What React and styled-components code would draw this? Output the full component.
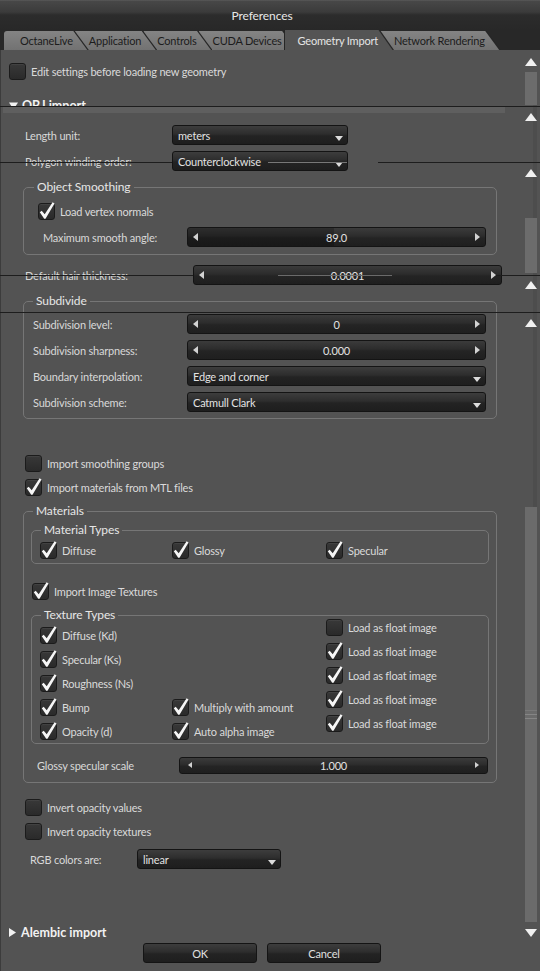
import styled, { createGlobalStyle } from 'styled-components';

const GlobalStyle = createGlobalStyle`
  html, body {
    margin: 0;
    padding: 0;
    background: #535353;
  }
  body {
    font-family: Lato, 'Liberation Sans', sans-serif;
    font-size: 11px;
    letter-spacing: -0.2px;
    color: #dadada;
  }
  * { box-sizing: border-box; }
`;

const Window = styled.div`
  position: relative;
  width: 540px;
  height: 971px;
  overflow: hidden;
  display: flex;
  flex-direction: column;
  background: #535353;
  box-shadow: inset 1px 0 0 #3c3c3c;
`;

const TitleBar = styled.div`
  height: 30px;
  flex-shrink: 0;
  display: flex;
  align-items: center;
  justify-content: center;
  padding-right: 16px;
  font-size: 12px;
  letter-spacing: -0.1px;
  color: #e8e8e8;
  background: linear-gradient(#5a5a5a 0, #474747 5%, #3b3b3b 40%, #2c2c2c 50%, #282828 100%);
`;

const TabBar = styled.div`
  height: 20px;
  flex-shrink: 0;
  display: flex;
  align-items: flex-end;
  padding-left: 4px;
  background: #282828;
`;

const Tab = styled.div`
  position: relative;
  height: ${p => (p.$active ? 20 : 19)}px;
  margin-left: ${p => (p.$first ? 0 : -14)}px;
  padding: 0 16px 0 ${p => (p.$first ? 16 : 14)}px;
  display: flex;
  align-items: center;
  white-space: nowrap;
  z-index: ${p => (p.$active ? 20 : 10 - p.$index)};
  color: ${p => (p.$active ? '#e4e4e4' : '#1c1c1c')};
  background: #262626;
  border-top-left-radius: ${p => (p.$first ? 3 : 0)}px;
  clip-path: polygon(0 0, calc(100% - 14px) 0, 100% 100%, 0 100%);

  &::before {
    content: '';
    position: absolute;
    top: 0;
    bottom: 0;
    right: 0;
    left: ${p => (p.$active ? 1 : 0)}px;
    z-index: -1;
    border-top-left-radius: ${p => (p.$first ? 3 : 0)}px;
    background: ${p => (p.$active ? '#545454' : 'linear-gradient(#848484, #727272)')};
    clip-path: polygon(0 0, calc(100% - 15.5px) 0, calc(100% - 1.5px) 100%, 0 100%);
  }
`;

const Body = styled.div`
  display: flex;
  height: 892px;
  flex-shrink: 0;
`;

const Content = styled.div`
  width: 522px;
  display: flex;
  flex-direction: column;
`;

const Row = styled.div`
  display: flex;
  align-items: center;
  flex-shrink: 0;
  height: ${p => p.$h || 24}px;
  margin-top: ${p => p.$mt || 0}px;
  padding-left: ${p => p.$indent || 0}px;
`;

const Section = styled.div`
  display: flex;
  align-items: center;
  gap: 4px;
  flex-shrink: 0;
  height: ${p => p.$h}px;
  margin-top: ${p => (p.$auto ? 'auto' : `${p.$mt || 0}px`)};
  padding-left: ${p => p.$indent}px;
  font-size: 12.5px;
  letter-spacing: 0;
  font-weight: 700;
  color: #f2f2f2;
`;

const Label = styled.span`
  width: ${p => p.$w}px;
  flex-shrink: 0;
  white-space: nowrap;
  color: #d8d8d8;
`;

const CheckItem = styled.label`
  display: flex;
  align-items: center;
  height: 24px;
  white-space: nowrap;
`;

const Box = styled.span`
  position: relative;
  width: 17px;
  height: 17px;
  flex-shrink: 0;
  border: 1px solid #1b1b1b;
  border-radius: 3px;
  background: linear-gradient(#383838, #2a2a2a);
  box-shadow: inset 0 1px 0 rgba(255, 255, 255, 0.05);
`;

const Tick = styled.svg`
  position: absolute;
  left: -1px;
  top: -1px;
  width: 17px;
  height: 17px;
  overflow: visible;
`;

const CheckText = styled.span`
  margin-left: 5px;
  color: #dadada;
`;

const Select = styled.div`
  position: relative;
  width: ${p => p.$w}px;
  height: 20px;
  flex-shrink: 0;
  padding-left: 5px;
  display: flex;
  align-items: center;
  color: #e2e2e2;
  border: 1px solid #141414;
  border-radius: 3px;
  background: linear-gradient(#3d3d3d 0, #2d2d2d 45%, #232323 55%, #1e1e1e 100%);

  &::after {
    content: '';
    position: absolute;
    right: 4px;
    bottom: 3px;
    border-left: 4px solid transparent;
    border-right: 4px solid transparent;
    border-top: 5px solid #dcdcdc;
  }
`;

const Slider = styled.div`
  position: relative;
  width: ${p => p.$w}px;
  height: ${p => p.$h || 20}px;
  flex-shrink: 0;
  display: flex;
  align-items: center;
  justify-content: center;
  overflow: hidden;
  color: #e2e2e2;
  border: 1px solid #141414;
  border-radius: 3px;
  background: linear-gradient(#3b3b3b 0, #2c2c2c 45%, #242424 55%, #1f1f1f 100%);
`;

const SliderFill = styled.div`
  position: absolute;
  left: 0;
  top: 0;
  bottom: 0;
  background: rgba(0, 0, 0, 0.22);
`;

const SliderValue = styled.span`
  position: relative;
`;

const Arrow = styled.span`
  position: absolute;
  top: 50%;
  transform: translateY(-50%);
  border-top: ${p => (p.$small ? 3 : 4.5)}px solid transparent;
  border-bottom: ${p => (p.$small ? 3 : 4.5)}px solid transparent;
  ${p =>
    p.$dir === 'left'
      ? `left: ${p.$small ? 8 : 5}px; border-right: ${p.$small ? 4 : 5}px solid #d2d2d2;`
      : `right: ${p.$small ? 8 : 5}px; border-left: ${p.$small ? 4 : 5}px solid #d2d2d2;`}
`;

const Group = styled.fieldset`
  margin: ${p => p.$mt || 0}px 0 0 ${p => p.$ml}px;
  width: ${p => p.$w}px;
  min-width: 0;
  flex-shrink: 0;
  padding: ${p => p.$pt || 0}px 0 ${p => p.$pb || 0}px 0;
  border: 1px solid #767676;
  border-radius: 5px;
  display: flex;
  flex-direction: column;
`;

const Legend = styled.legend`
  margin-left: ${p => p.$ml || 9}px;
  padding: 0 3px;
  font-size: 12px;
  letter-spacing: -0.1px;
  line-height: 16px;
  color: #e6e6e6;
`;

const TypeGrid = styled.div`
  display: grid;
  grid-template-columns: 132px 154px 1fr;
  align-items: start;
  padding-left: 8px;
`;

const Column = styled.div`
  display: flex;
  flex-direction: column;
  margin-top: ${p => p.$mt || 0}px;
`;

const ScrollBar = styled.div`
  width: 18px;
  display: flex;
  flex-direction: column;
  align-items: center;
  padding: 8px 0 5px;
`;

const UpArrow = styled.div`
  border-left: 6px solid transparent;
  border-right: 6px solid transparent;
  border-bottom: 8px solid #f0f0f0;
`;

const DownArrow = styled.div`
  margin-top: 7px;
  border-left: 6px solid transparent;
  border-right: 6px solid transparent;
  border-top: 8px solid #f0f0f0;
`;

const Track = styled.div`
  flex: 1;
  width: 12px;
  margin-top: 6px;
  display: flex;
  flex-direction: column;
  background: linear-gradient(to right, transparent 8px, #4d4d4d 8px);
`;

const Handle = styled.div`
  position: relative;
  margin-top: auto;
  height: 415px;
  background: #6b6b6b;

  &::after {
    content: '';
    position: absolute;
    left: 0;
    right: 0;
    top: 50%;
    height: 9px;
    transform: translateY(-50%);
    background: repeating-linear-gradient(#858585 0 1px, transparent 1px 4px);
  }
`;

const Footer = styled.div`
  display: flex;
  gap: 10px;
  padding: 1px 0 0 143px;
  flex-shrink: 0;
`;

const Button = styled.button`
  width: 114px;
  height: 20px;
  padding: 0;
  font-family: inherit;
  font-size: 11px;
  letter-spacing: -0.2px;
  color: #e0e0e0;
  border: 1px solid #141414;
  border-radius: 3px;
  background: linear-gradient(#3d3d3d 0, #2d2d2d 45%, #232323 55%, #1e1e1e 100%);
`;

const Overlay = styled.div`
  position: absolute;
  inset: 0;
  pointer-events: none;
  z-index: 50;
`;

const GhostLine = styled.div`
  position: absolute;
  top: ${p => p.$y}px;
  left: ${p => p.$x}px;
  width: ${p => p.$w}px;
  height: ${p => p.$h || 1}px;
  background: ${p => p.$c || '#1d1d1d'};
`;

const GhostArrow = styled.div`
  position: absolute;
  top: ${p => p.$y}px;
  left: 525px;
  border-left: 6px solid transparent;
  border-right: 6px solid transparent;
  border-bottom: 8px solid #f0f0f0;
`;

const Caret = ({ open }) => (
  <svg width="9" height="9" viewBox="0 0 9 9">
    {open ? <path d="M0 1.5 H9 L4.5 8.5 Z" fill="#f2f2f2" /> : <path d="M1 0 L8 4.5 L1 9 Z" fill="#f2f2f2" />}
  </svg>
);

const Check = ({ checked, children }) => (
  <CheckItem>
    <Box>
      {checked && (
        <Tick viewBox="0 0 17 17">
          <path d="M1.8 9.3 L3.7 7.7 L6.7 11.3 L14.6 -0.7 L16.5 0.5 L7.5 15.8 L6.2 15.8 Z" fill="#f6f6f6" />
        </Tick>
      )}
    </Box>
    {children && <CheckText>{children}</CheckText>}
  </CheckItem>
);

const Spin = ({ w, h, value, fill, small }) => (
  <Slider $w={w} $h={h}>
    {fill ? <SliderFill style={{ width: `${fill * 100}%` }} /> : null}
    <Arrow $dir="left" $small={small} />
    <SliderValue>{value}</SliderValue>
    <Arrow $dir="right" $small={small} />
  </Slider>
);

const tabs = ['OctaneLive', 'Application', 'Controls', 'CUDA Devices', 'Geometry Import', 'Network Rendering'];

const App = () => {
  return (
    <Window>
      <GlobalStyle />
      <TitleBar>Preferences</TitleBar>
      <TabBar>
        {tabs.map((t, i) => (
          <Tab key={t} $index={i} $first={i === 0} $active={t === 'Geometry Import'}>
            {t}
          </Tab>
        ))}
      </TabBar>

      <Body>
        <Content>
          <Row $mt={9} $indent={9}>
            <Check>Edit settings before loading new geometry</Check>
          </Row>

          <Section $h={24} $mt={10} $indent={9}>
            <Caret open />
            OBJ import
          </Section>

          <Row $h={26} $mt={5} $indent={25}>
            <Label $w={147}>Length unit:</Label>
            <Select $w={176}>meters</Select>
          </Row>
          <Row $h={26} $indent={25}>
            <Label $w={147}>Polygon winding order:</Label>
            <Select $w={176}>Counterclockwise</Select>
          </Row>

          <Group $mt={5} $ml={23} $w={474} $pt={3} $pb={4}>
            <Legend $ml={10}>Object Smoothing</Legend>
            <Row $h={26} $indent={14}>
              <Check checked>Load vertex normals</Check>
            </Row>
            <Row $h={26} $indent={19}>
              <Label $w={144}>Maximum smooth angle:</Label>
              <Spin w={299} value="89.0" fill={0.49} />
            </Row>
          </Group>

          <Row $h={26} $mt={7} $indent={25}>
            <Label $w={168}>Default hair thickness:</Label>
            <Spin w={309} value="0.0001" />
          </Row>

          <Group $mt={5} $ml={23} $w={474} $pt={2} $pb={3}>
            <Legend>Subdivide</Legend>
            <Row $h={26} $indent={9}>
              <Label $w={154}>Subdivision level:</Label>
              <Spin w={299} value="0" />
            </Row>
            <Row $h={26} $indent={9}>
              <Label $w={154}>Subdivision sharpness:</Label>
              <Spin w={299} value="0.000" />
            </Row>
            <Row $h={26} $indent={9}>
              <Label $w={154}>Boundary interpolation:</Label>
              <Select $w={299}>Edge and corner</Select>
            </Row>
            <Row $h={26} $indent={9}>
              <Label $w={154}>Subdivision scheme:</Label>
              <Select $w={299}>Catmull Clark</Select>
            </Row>
          </Group>

          <Row $mt={32} $indent={25}>
            <Check>Import smoothing groups</Check>
          </Row>
          <Row $indent={25}>
            <Check checked>Import materials from MTL files</Check>
          </Row>

          <Group $mt={4} $ml={23} $w={474} $pt={3} $pb={4}>
            <Legend>Materials</Legend>
            <Group $ml={7} $w={458} $pb={1}>
              <Legend>Material Types</Legend>
              <TypeGrid>
                <Check checked>Diffuse</Check>
                <Check checked>Glossy</Check>
                <Check checked>Specular</Check>
              </TypeGrid>
            </Group>

            <Row $mt={15} $indent={8}>
              <Check checked>Import Image Textures</Check>
            </Row>

            <Group $mt={4} $ml={7} $w={458}>
              <Legend>Texture Types</Legend>
              <TypeGrid>
                <Column>
                  <Check checked>Diffuse (Kd)</Check>
                  <Check checked>Specular (Ks)</Check>
                  <Check checked>Roughness (Ns)</Check>
                  <Check checked>Bump</Check>
                  <Check checked>Opacity (d)</Check>
                </Column>
                <Column $mt={72}>
                  <Check checked>Multiply with amount</Check>
                  <Check checked>Auto alpha image</Check>
                </Column>
                <Column $mt={-8}>
                  <Check>Load as float image</Check>
                  <Check checked>Load as float image</Check>
                  <Check checked>Load as float image</Check>
                  <Check checked>Load as float image</Check>
                  <Check checked>Load as float image</Check>
                </Column>
              </TypeGrid>
            </Group>

            <Row $h={26} $mt={8} $indent={13}>
              <Label $w={142}>Glossy specular scale</Label>
              <Spin w={309} h={17} value="1.000" small />
            </Row>
          </Group>

          <Row $mt={12} $indent={25}>
            <Check>Invert opacity values</Check>
          </Row>
          <Row $indent={25}>
            <Check>Invert opacity textures</Check>
          </Row>
          <Row $h={26} $mt={3} $indent={30}>
            <Label $w={107}>RGB colors are:</Label>
            <Select $w={144}>linear</Select>
          </Row>

          <Section $h={20} $auto $indent={8}>
            <Caret />
            Alembic import
          </Section>
        </Content>

        <ScrollBar>
          <UpArrow />
          <Track>
            <Handle />
          </Track>
          <DownArrow />
        </ScrollBar>
      </Body>

      <Footer>
        <Button>OK</Button>
        <Button>Cancel</Button>
      </Footer>

      <Overlay>
        <GhostLine $y={106} $x={0} $w={540} />
        <GhostLine $y={107} $x={3} $w={502} $h={6} $c="#5f5f5f" />
        <GhostLine $y={72} $x={525} $w={12} $h={33} $c="#6c6c6c" />
        <GhostLine $y={162} $x={0} $w={172} />
        <GhostLine $y={162} $x={268} $w={79} $c="#777" />
        <GhostLine $y={162} $x={378} $w={162} />
        <GhostLine $y={218} $x={525} $w={12} $h={55} $c="#6c6c6c" />
        <GhostLine $y={275} $x={0} $w={193} />
        <GhostLine $y={275} $x={278} $w={114} $c="#6a6a6a" />
        <GhostLine $y={275} $x={496} $w={44} />
        <GhostLine $y={312} $x={0} $w={540} />
        <GhostArrow $y={113} />
        <GhostArrow $y={169} />
        <GhostArrow $y={281} />
        <GhostArrow $y={319} />
      </Overlay>
    </Window>
  );
};

export default App;
